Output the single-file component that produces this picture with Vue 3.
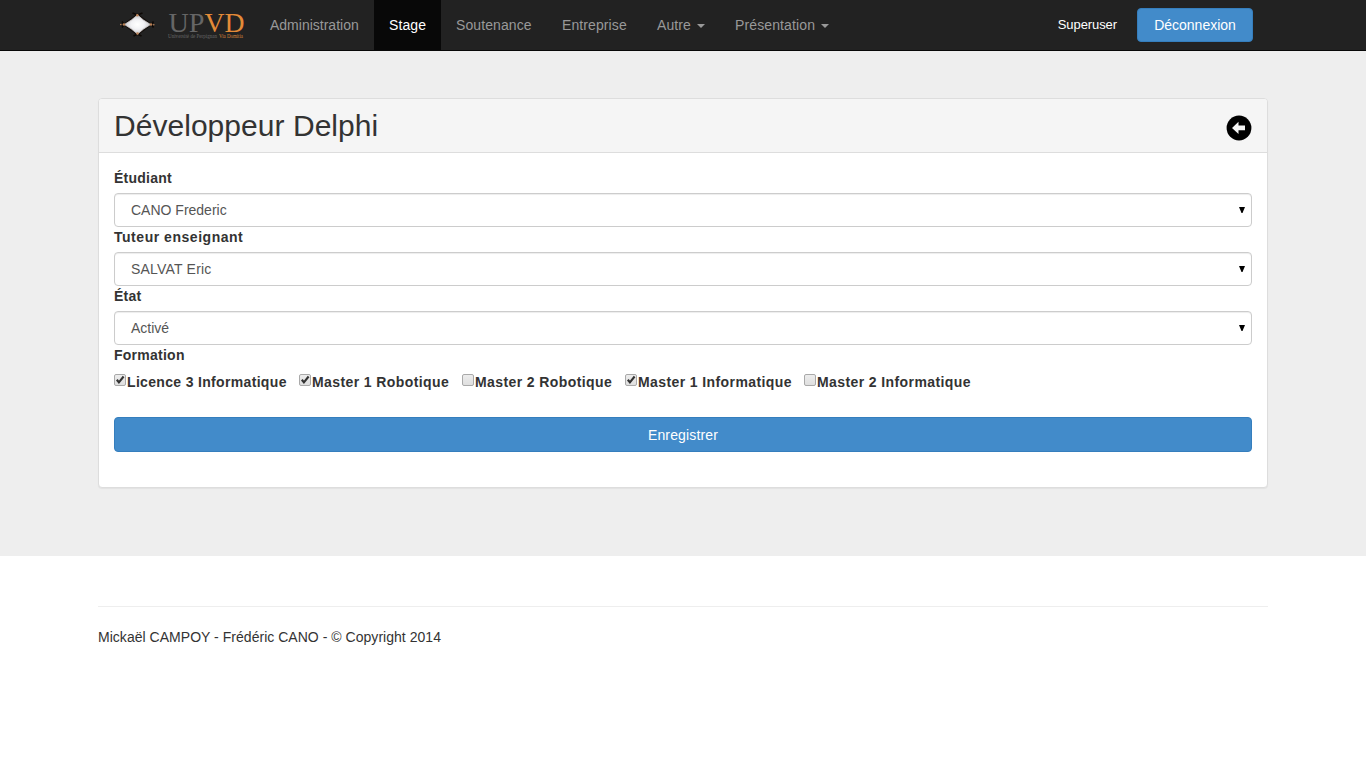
<script setup>
import { ref } from 'vue'

const nav = [
  { label: 'Administration', cls: 'w-admin' },
  { label: 'Stage', cls: 'w-stage', active: true },
  { label: 'Soutenance', cls: 'w-sout' },
  { label: 'Entreprise', cls: 'w-ent' },
  { label: 'Autre', cls: 'w-autre', menu: true },
  { label: 'Présentation', cls: 'w-pres', menu: true },
]
const fields = [
  { label: 'Étudiant', value: 'CANO Frederic', lblCls: 'fit-short' },
  { label: 'Tuteur enseignant', value: 'SALVAT Eric', lblCls: 'fit-long', cls: 'fit-salvat' },
  { label: 'État', value: 'Activé', lblCls: 'fit-short' },
]
const formations = ref([
  { label: 'Licence 3 Informatique', checked: true },
  { label: 'Master 1 Robotique', checked: true, wide: true },
  { label: 'Master 2 Robotique', checked: false, wide: true },
  { label: 'Master 1 Informatique', checked: true, wide: true },
  { label: 'Master 2 Informatique', checked: false, wide: true },
])
</script>

<template>
  <div class="page">
    <header class="navbar">
      <div class="container bar">
        <svg class="logo" width="157" height="50" viewBox="0 0 157 50">
          <defs>
            <radialGradient id="glow">
              <stop offset="0" stop-color="#fff" />
              <stop offset=".5" stop-color="#f2f2f5" />
              <stop offset="1" stop-color="#c4c4c8" />
            </radialGradient>
          </defs>
          <path d="M39.500 13.500 L54.500 24.500 L39.500 35.500 L24.500 24.500Z" fill="#15100d" />
          <path d="M34.500 13 L39.500 15 L44.500 13 M35.500 36 L39.500 34 L43.500 36 M24 21.500 L26 24.500 L24 27.500 M55.500 21.500 L53.500 24.500 L55.500 27.500" fill="none" stroke="#0d0805" stroke-width="1.500" />
          <path d="M39.500 15 Q44.500 20 52.500 24.500 Q45.500 28.500 39.500 34 Q33.500 28.500 26.500 24.500 Q34 20 39.500 15Z" fill="url(#glow)" stroke="#cfcaca" stroke-width=".8" stroke-linejoin="round" />
          <g fill="#b98258">
            <circle cx="39.300" cy="15.300" r="1.300" />
            <circle cx="39.500" cy="33.500" r="1.300" />
            <circle cx="26" cy="24.500" r="1.300" />
            <circle cx="53" cy="24.500" r="1.300" />
            <circle cx="22.800" cy="24.500" r=".8" />
            <circle cx="55.800" cy="24.800" r=".8" />
          </g>
          <text x="70.500" y="31.500" class="word" fill="#666" textLength="36" lengthAdjust="spacingAndGlyphs">UP</text>
          <text x="106.500" y="31.500" class="word" fill="#e48b38" textLength="40" lengthAdjust="spacingAndGlyphs">VD</text>
          <text x="70" y="37.700" class="tag" fill="#686868" textLength="49" lengthAdjust="spacingAndGlyphs">Université de Perpignan</text>
          <text x="121" y="37.700" class="tag" fill="#d8853a" textLength="24" lengthAdjust="spacingAndGlyphs">Via Domitia</text>
        </svg>
        <nav class="links">
          <a v-for="n in nav" :key="n.label" :class="[n.cls, { active: n.active }]">
            {{ n.label }}<i v-if="n.menu" class="caret"></i>
          </a>
        </nav>
        <span class="user">Superuser</span>
        <button class="btn logout">Déconnexion</button>
      </div>
    </header>

    <main class="jumbo">
      <section class="panel">
        <div class="heading">
          <h1>Développeur Delphi</h1>
          <svg class="back" width="26" height="26" viewBox="0 0 26 26">
            <circle cx="13" cy="13" r="12.400" fill="#000" />
            <path d="M6 13 L12.500 6.800 V10.500 H19 V15.200 H12.500 V19Z" fill="#f5f5f5" />
          </svg>
        </div>
        <form class="body" @submit.prevent>
          <template v-for="f in fields" :key="f.label">
            <label class="lbl" :class="f.lblCls">{{ f.label }}</label>
            <div class="select">
              <span :class="f.cls">{{ f.value }}</span>
              <svg width="6" height="6" viewBox="0 0 6 6"><path d="M0 0H6L3.500 6H2.500Z" fill="#000" /></svg>
            </div>
          </template>
          <div class="lbl last">Formation</div>
          <div class="checks">
            <label v-for="c in formations" :key="c.label" class="check" :class="{ wide: c.wide }">
              <svg width="13" height="13" viewBox="0 0 13 13" @click="c.checked = !c.checked">
                <defs>
                  <linearGradient id="boxfill" x2="0" y2="1">
                    <stop offset="0" stop-color="#ededed" />
                    <stop offset="1" stop-color="#dedede" />
                  </linearGradient>
                </defs>
                <rect x=".5" y=".5" width="11" height="11" rx="1.500" fill="url(#boxfill)" stroke="#a9a9a9" />
                <path v-if="c.checked" d="M2.800 5.800 L4.900 8.300 L9.600 2.500" fill="none" stroke="#333" stroke-width="2.100" />
              </svg>
              <span>{{ c.label }}</span>
            </label>
          </div>
          <button class="btn save">Enregistrer</button>
        </form>
      </section>
    </main>

    <footer class="container foot">Mickaël CAMPOY - Frédéric CANO - © Copyright 2014</footer>
  </div>
</template>

<style>
body { background: #fff; }
</style>

<style scoped>
* { box-sizing: border-box; }
.page {
  font: 14px/20px "Liberation Sans", Arial, sans-serif;
  color: #333;
  height: 768px;
  overflow: hidden;
}
.container { width: 1170px; margin: 0 auto; }
.navbar { height: 51px; background: #222; border-bottom: 1px solid #080808; }
.bar { display: flex; height: 50px; }
.logo { flex: none; display: block; }
.word { font: 28px "Liberation Serif", serif; }
.tag { font: 5.500px "Liberation Serif", serif; }
.links { display: flex; flex: none; }
.links a { color: #999; padding: 15px 0 15px 15px; white-space: nowrap; }
.links .active { background: #080808; color: #fff; }
.w-admin { width: 119px; }
.w-stage { width: 67px; letter-spacing: .1px; }
.w-sout { width: 106px; letter-spacing: .1px; }
.w-ent { width: 95px; letter-spacing: .1px; }
.w-autre { width: 78px; letter-spacing: .1px; }
.w-pres { width: 125px; letter-spacing: .12px; }
.caret {
  display: inline-block;
  margin-left: 6px;
  vertical-align: middle;
  border-top: 4px solid #999;
  border-left: 4px solid transparent;
  border-right: 4px solid transparent;
}
.user { margin-left: auto; color: #fff; font-size: 13px; line-height: 49px; letter-spacing: -.08px; }
.btn {
  display: block;
  font: inherit;
  color: #fff;
  background: #428bca;
  border: 1px solid #357ebd;
  border-radius: 4px;
  padding: 0;
}
.logout { width: 116px; height: 34px; margin: 8px 15px 0 20px; }
.jumbo { height: 505px; background: #eee; padding-top: 47px; }
.panel {
  width: 1170px;
  height: 390px;
  margin: 0 auto;
  background: #fff;
  border: 1px solid #ddd;
  border-radius: 4px;
  box-shadow: 0 1px 1px rgba(0, 0, 0, .05);
}
.heading {
  display: flex;
  justify-content: space-between;
  height: 54px;
  padding: 10px 15px 0;
  background: #f5f5f5;
  border-bottom: 1px solid #ddd;
  border-radius: 3px 3px 0 0;
}
h1 { margin: 0; font-size: 30px; font-weight: 400; line-height: 33px; letter-spacing: .04px; }
.back { margin-top: 6px; }
.body { padding: 15px; }
.lbl { display: block; height: 25px; font-weight: 700; letter-spacing: .25px; }
.fit-short { letter-spacing: .25px; }
.fit-long { letter-spacing: .53px; }
.fit-salvat { letter-spacing: .2px; }
.last { height: 27px; }
.select {
  display: flex;
  align-items: center;
  justify-content: space-between;
  height: 34px;
  padding: 0 6px 0 16px;
  border: 1px solid #ccc;
  border-radius: 4px;
  background: #fff;
  color: #555;
  box-shadow: inset 0 1px 1px rgba(0, 0, 0, .075);
}
.checks { display: grid; grid-template-columns: 185px 163px 163px 179px auto; height: 45px; }
.check { display: flex; font-weight: 700; letter-spacing: .33px; white-space: nowrap; height: 20px; }
.wide { letter-spacing: .4px; }
.check svg { flex: none; margin-top: 2px; }
.save { width: 100%; height: 35px; letter-spacing: .15px; }
.foot { margin-top: 50px; padding-top: 20px; border-top: 1px solid #eee; letter-spacing: .03px; }
</style>
